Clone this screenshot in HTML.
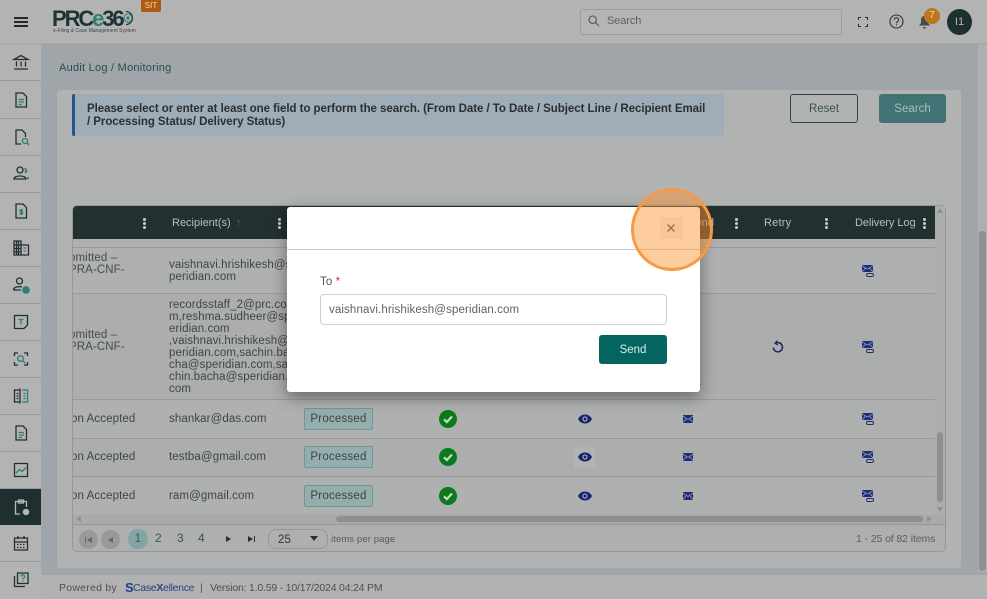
<!DOCTYPE html>
<html><head><meta charset="utf-8"><style>
*{box-sizing:border-box}
html,body{margin:0;padding:0;width:987px;height:599px;overflow:hidden;background:#a0a5a9;font-family:"Liberation Sans",sans-serif;color:#3a3f3f}
.a{position:absolute}
.t{position:absolute;white-space:nowrap;font-size:11.5px;letter-spacing:.1px;color:#3f4545}
.side{position:absolute;left:0;width:41px;height:37px;border-bottom:1px solid #989b9b;background:#b3b3b3}
.side svg{position:absolute;left:11px;top:8px;width:20px;height:20px;fill:none;stroke:#232f30;stroke-width:1.3}
.hl{position:absolute;left:73px;width:863px;height:1px;background:#989a9a}
.badge{position:absolute;left:304px;width:69px;height:22px;background:#95aead;border:1px solid #6a9a97;border-radius:2px;font-size:11.5px;letter-spacing:.2px;color:#3a4444;text-align:center;line-height:20px}
.dots{position:absolute;width:3px;height:3px;border-radius:50%;background:#c9cecd;box-shadow:0 4px 0 #c9cecd,0 8px 0 #c9cecd;top:218px}
.clip{position:absolute;left:73px;width:70px;overflow:hidden;height:30px}
.clip .t{left:-4px;top:0}
svg{position:absolute;overflow:visible}
</style></head><body>

<!-- top bar -->
<div class="a" style="left:0;top:0;width:987px;height:44px;background:#b3b3b3;border-bottom:1px solid #a8a9a9"></div>
<div class="a" style="left:14px;top:17px;width:14px;height:2px;background:#22292a;box-shadow:0 4px 0 #22292a,0 8px 0 #22292a"></div>
<div class="t" style="left:52px;top:6px;font-size:22px;font-weight:bold;letter-spacing:-2.1px;color:#1e3336;line-height:26px">PRC<span style="color:#2f7f78">e</span>36</div>
<svg style="left:122px;top:10px" width="14" height="16" viewBox="0 0 14 16"><path d="M4 1.500A6.500 6.500 0 1 1 4 14.500" fill="none" stroke="#1e3336" stroke-width="1.200"/><circle cx="6" cy="8" r="4" fill="none" stroke="#2f7f78" stroke-width="1.100"/><circle cx="6" cy="8" r="1.600" fill="#2f7f78"/></svg>
<div class="t" style="left:53px;top:28px;font-size:5px;letter-spacing:0;color:#3d4a4c">e-Filing &amp; Case Management System</div>
<div class="a" style="left:141px;top:0;width:20px;height:12px;background:#b05a10;border-radius:0 0 2px 2px;color:#e8d3c0;font-size:8px;text-align:center;line-height:11px">SIT</div>

<div class="a" style="left:580px;top:9px;width:262px;height:26px;border:1px solid #9b9c9c;border-radius:3px;background:#b5b5b5"></div>
<svg style="left:588px;top:15px" width="12" height="12" viewBox="0 0 12 12" fill="none" stroke="#555" stroke-width="1.100"><circle cx="4.700" cy="4.700" r="3.700"/><path d="M7.500 7.500L11 11"/></svg>
<div class="t" style="left:607px;top:15px;color:#5f6161;font-size:11px;letter-spacing:-.1px">Search</div>
<svg style="left:858px;top:17px" width="10" height="10" viewBox="0 0 10 10" fill="none" stroke="#333" stroke-width="1.100"><path d="M0.500 3V.5H3M7 .5H9.500V3M9.500 7V9.500H7M3 9.500H.5V7"/></svg>
<svg style="left:889px;top:14px" width="15" height="15" viewBox="0 0 15 15" fill="none" stroke="#333" stroke-width="1.100"><circle cx="7.500" cy="7.500" r="6.500"/><path d="M5.400 5.800a2.100 2.100 0 1 1 3.200 1.800c-.7.400-1.100.8-1.100 1.600M7.500 10.400v1.100"/></svg>
<svg style="left:918px;top:15px" width="13" height="14" viewBox="0 0 13 14"><path d="M6.500 1C4 1 3 3 3 5.500V8L1 10.500H12L10 8V5.500C10 3 9 1 6.500 1Z" fill="#474a4b"/><path d="M5 12h3v1.400H5z" fill="#474a4b"/></svg>
<div class="a" style="left:924px;top:8px;width:16px;height:16px;border-radius:50%;background:#bd7719;color:#ecd9bd;font-size:10px;text-align:center;line-height:15px">7</div>
<div class="a" style="left:947px;top:9px;width:25px;height:26px;border-radius:50%;background:#1e2f30;color:#b4baba;font-size:11px;text-align:center;line-height:26px">I1</div>

<!-- sidebar -->
<div class="a" style="left:0;top:44px;width:41px;height:555px;background:#b3b3b3"></div>
<div class="side" style="top:44px"><svg viewBox="0 0 20 20"><path d="M3 7.500L10 3.500L17 7.500H3ZM5.500 9.500V14.500M10 9.500V14.500M14.500 9.500V14.500M3 17H17"/></svg></div>
<div class="side" style="top:82px"><svg viewBox="0 0 20 20"><path d="M5 3H12L15.500 6.500V17H5Z"/><path d="M7.500 9.500H13M7.500 12H13M7.500 14.500H11" stroke="#2f7f78"/></svg></div>
<div class="side" style="top:119px"><svg viewBox="0 0 20 20"><path d="M10 17H5V3H11L14.500 6.500V10"/><circle cx="14" cy="14" r="2.500" stroke="#2f7f78"/><path d="M16 16L18 18" stroke="#2f7f78"/></svg></div>
<div class="side" style="top:156px"><svg viewBox="0 0 20 20"><circle cx="9" cy="6" r="3"/><path d="M3 15C3 11 15 11 15 15Z"/><path d="M14 4L15.500 7L14 9M16 14H18" stroke="#2f7f78" stroke-width="1.800"/></svg></div>
<div class="side" style="top:193px"><svg viewBox="0 0 20 20"><path d="M5 3H12L15.500 6.500V17H5Z"/><path d="M12.200 9H9.200V11H11.500V13H8.500M10.300 8V14" stroke="#2f7f78"/></svg></div>
<div class="side" style="top:230px"><svg viewBox="0 0 20 20"><path d="M3 3H10V17H3ZM10 7H17.500V17H10ZM5.500 3V17M7.500 3V17M3 7H10M3 10.500H10M3 14H10"/><path d="M12.500 10H15M12.500 13H15" stroke="#2f7f78"/></svg></div>
<div class="side" style="top:267px"><svg viewBox="0 0 20 20"><circle cx="8.500" cy="6" r="3"/><path d="M2.500 15C2.500 12 8 11 11 12M2.500 15H10"/><circle cx="15" cy="15" r="3.200" fill="#2f7f78" stroke="#2f7f78"/></svg></div>
<div class="side" style="top:304px"><svg viewBox="0 0 20 20"><path d="M3.500 3.500H16.500V13L13 16.500H3.500Z"/><path d="M7.500 7.500H12.500M10 7.500V12.500" stroke="#2f7f78"/></svg></div>
<div class="side" style="top:341px"><svg viewBox="0 0 20 20"><path d="M3.500 7V4H7M13 4H16.500V7M16.500 13V16H13M7 16H3.500V13"/><circle cx="9.500" cy="9.500" r="2.800" stroke="#2f7f78"/><path d="M11.500 11.500L14 14" stroke="#2f7f78"/></svg></div>
<div class="side" style="top:378px"><svg viewBox="0 0 20 20"><path d="M9 4H3.500V16H9M9 2.500V17.500M5.500 7.500H7.500M5.500 10H7.500M5.500 12.500H7.500"/><path d="M11 4H16.500V16H11M12.500 7.500H14.500M12.500 10H14.500M12.500 12.500H14.500" stroke="#2f7f78"/></svg></div>
<div class="side" style="top:415px"><svg viewBox="0 0 20 20"><path d="M5 3H12L15.500 6.500V17H5Z"/><path d="M7.500 9.500H13M7.500 12H13M7.500 14.500H11" stroke="#2f7f78"/></svg></div>
<div class="side" style="top:452px"><svg viewBox="0 0 20 20"><path d="M3.500 3.500H16.500V16.500H3.500Z"/><path d="M5 13L8.500 9.500L11 11.500L15 7.500" stroke="#2f7f78"/></svg></div>
<div class="side" style="top:489px;background:#1f2f30;height:36px;border:0"><svg viewBox="0 0 20 20" style="stroke:#b4b9b9"><path d="M9 17H4.500V4.500H15.500V10M7.500 3H12.500V6H7.500Z"/><circle cx="15" cy="15" r="2.600" fill="#b4b9b9"/></svg></div>
<div class="side" style="top:525px"><svg viewBox="0 0 20 20"><path d="M3.500 5H16.500V17H3.500ZM3.500 9H16.500M7 3V6M13 3V6"/><path d="M6 11.500H14M6 14.500H14" stroke-dasharray="1.500 1.500"/></svg></div>
<div class="side" style="top:562px;border:0"><svg viewBox="0 0 20 20"><path d="M6.500 3H17V13.500H6.500ZM3.500 6V16.500H14"/><path d="M10 6.500a1.800 1.800 0 1 1 2.600 1.700c-.6.300-.9.700-.9 1.300M11.700 10.500v1" stroke="#2f7f78"/></svg></div>

<!-- content -->
<div class="t" style="left:59px;top:62px;color:#23504f;font-size:11px;letter-spacing:.25px">Audit Log / Monitoring</div>
<div class="a" style="left:57px;top:90px;width:904px;height:478px;background:#b1b2b2;border-radius:3px"></div>
<div class="a" style="left:72px;top:94px;width:652px;height:42px;background:#9fadb9;border-left:3px solid #23588f;border-radius:2px"></div>
<div class="t" style="left:87px;top:102px;font-size:11.500px;font-weight:bold;letter-spacing:-.05px;color:#2b2f31;line-height:13px;padding-top:.5px">Please select or enter at least one field to perform the search. (From Date / To Date / Subject Line / Recipient Email<br>/ Processing Status/ Delivery Status)</div>
<div class="a" style="left:790px;top:94px;width:68px;height:29px;border:1px solid #234a49;border-radius:3px;text-align:center;line-height:28px;font-size:11.500px;color:#3c5554">Reset</div>
<div class="a" style="left:879px;top:94px;width:67px;height:29px;background:#417374;border-radius:3px;text-align:center;line-height:30px;font-size:11.500px;color:#a6c0bf">Search</div>

<!-- table -->
<div class="a" style="left:72px;top:205px;width:874px;height:347px;border:1px solid #969898;border-radius:5px;background:#aeafaf"></div>
<div class="a" style="left:73px;top:206px;width:862px;height:33px;background:#22302f;border-radius:4px 0 0 0"></div>
<div class="a" style="left:73px;top:248px;width:862px;height:45px;background:#afb0b0"></div>
<div class="a" style="left:73px;top:293px;width:862px;height:107px;background:#acadad"></div>
<div class="a" style="left:73px;top:400px;width:862px;height:38px;background:#afb0b0"></div>
<div class="a" style="left:73px;top:438px;width:862px;height:39px;background:#acadad"></div>
<div class="a" style="left:73px;top:477px;width:862px;height:37px;background:#afb0b0"></div>
<div class="hl" style="top:247px"></div><div class="hl" style="top:293px"></div><div class="hl" style="top:399px"></div><div class="hl" style="top:438px"></div><div class="hl" style="top:476px"></div>
<div class="a" style="left:73px;top:514px;width:872px;height:11px;background:#a9aaaa;border-bottom:1px solid #969898"></div>
<div class="a" style="left:336px;top:516px;width:587px;height:6px;background:#8e8f8f;border-radius:3px"></div>
<div class="a" style="left:935px;top:206px;width:10px;height:308px;background:#acadad"></div>
<div class="a" style="left:937px;top:432px;width:6px;height:70px;background:#8e8f8f;border-radius:3px"></div>
<svg style="left:937px;top:208px" width="6" height="5" viewBox="0 0 6 5" fill="#8e8f8f"><path d="M3 0L6 5H0Z"/></svg>
<svg style="left:937px;top:507px" width="6" height="5" viewBox="0 0 6 5" fill="#8e8f8f"><path d="M0 0H6L3 5Z"/></svg>
<svg style="left:927px;top:516px" width="5" height="6" viewBox="0 0 5 6" fill="#8e8f8f"><path d="M0 0L5 3L0 6Z"/></svg>
<svg style="left:76px;top:516px" width="5" height="6" viewBox="0 0 5 6" fill="#8e8f8f"><path d="M5 0L0 3L5 6Z"/></svg>

<div class="t" style="left:172px;top:217px;color:#b9bfbe;font-size:11px;letter-spacing:0">Recipient(s) <span style="color:#5f6b6a;margin-left:2px">↑</span></div>
<div class="t" style="left:764px;top:217px;color:#b9bfbe;font-size:11px;letter-spacing:.2px">Retry</div>
<div class="t" style="left:855px;top:217px;color:#b9bfbe;font-size:11px;letter-spacing:-.05px">Delivery Log</div>
<div class="t" style="left:688px;top:217px;color:#b9bfbe;font-size:11px">Send</div>
<div class="dots" style="left:143px"></div><div class="dots" style="left:278px"></div><div class="dots" style="left:735px"></div><div class="dots" style="left:825px"></div><div class="dots" style="left:923px"></div>

<div class="clip" style="top:252px"><div class="t" style="line-height:12px;color:#474c4c">omitted –<br>PRA-CNF-</div></div>
<div class="t" style="left:169px;top:259px;line-height:12px">vaishnavi.hrishikesh@s<br>peridian.com</div>
<div class="clip" style="top:329px"><div class="t" style="line-height:12px;color:#474c4c">omitted –<br>PRA-CNF-</div></div>
<div class="t" style="left:169px;top:299px;line-height:12px">recordsstaff_2@prc.co<br>m,reshma.sudheer@sp<br>eridian.com<br>,vaishnavi.hrishikesh@s<br>peridian.com,sachin.ba<br>cha@speridian.com,sa<br>chin.bacha@speridian.<br>com</div>
<div class="clip" style="top:413px"><div class="t" style="left:-2px">on Accepted</div></div><div class="t" style="left:169px;top:413px">shankar@das.com</div>
<div class="clip" style="top:451px"><div class="t" style="left:-2px">on Accepted</div></div><div class="t" style="left:169px;top:451px">testba@gmail.com</div>
<div class="clip" style="top:490px"><div class="t" style="left:-2px">on Accepted</div></div><div class="t" style="left:169px;top:490px">ram@gmail.com</div>

<div class="badge" style="top:408px">Processed</div>
<div class="badge" style="top:446px">Processed</div>
<div class="badge" style="top:485px">Processed</div>

<svg style="left:439px;top:410px" width="18" height="18" viewBox="0 0 18 18"><circle cx="9" cy="9" r="9" fill="#0b7a1c"/><path d="M5 9.300L7.800 12L13 6.500" fill="none" stroke="#c9d8c9" stroke-width="2.200"/></svg>
<svg style="left:439px;top:448px" width="18" height="18" viewBox="0 0 18 18"><circle cx="9" cy="9" r="9" fill="#0b7a1c"/><path d="M5 9.300L7.800 12L13 6.500" fill="none" stroke="#c9d8c9" stroke-width="2.200"/></svg>
<svg style="left:439px;top:487px" width="18" height="18" viewBox="0 0 18 18"><circle cx="9" cy="9" r="9" fill="#0b7a1c"/><path d="M5 9.300L7.800 12L13 6.500" fill="none" stroke="#c9d8c9" stroke-width="2.200"/></svg>

<div class="a" style="left:574px;top:447px;width:21px;height:21px;background:#b2b3b3"></div>
<svg style="left:578px;top:414px" width="14" height="10" viewBox="0 0 14 10"><path d="M0 5C3 -1 11 -1 14 5C11 11 3 11 0 5Z" fill="#14246f"/><circle cx="7" cy="5" r="2.600" fill="#b0b0b0"/><circle cx="7" cy="5" r="1.500" fill="#14246f"/></svg>
<svg style="left:578px;top:452px" width="14" height="10" viewBox="0 0 14 10"><path d="M0 5C3 -1 11 -1 14 5C11 11 3 11 0 5Z" fill="#14246f"/><circle cx="7" cy="5" r="2.600" fill="#b0b0b0"/><circle cx="7" cy="5" r="1.500" fill="#14246f"/></svg>
<svg style="left:578px;top:491px" width="14" height="10" viewBox="0 0 14 10"><path d="M0 5C3 -1 11 -1 14 5C11 11 3 11 0 5Z" fill="#14246f"/><circle cx="7" cy="5" r="2.600" fill="#b0b0b0"/><circle cx="7" cy="5" r="1.500" fill="#14246f"/></svg>

<svg style="left:683px;top:415px" width="10" height="8" viewBox="0 0 10 8"><rect width="10" height="8" fill="#1e2d76"/><path d="M0 1L5 4.500L10 1M0 7.500L3.500 3.500M10 7.500L6.500 3.500" stroke="#aab0c6" fill="none" stroke-width=".7"/></svg>
<svg style="left:683px;top:453px" width="10" height="8" viewBox="0 0 10 8"><rect width="10" height="8" fill="#1e2d76"/><path d="M0 1L5 4.500L10 1M0 7.500L3.500 3.500M10 7.500L6.500 3.500" stroke="#aab0c6" fill="none" stroke-width=".7"/></svg>
<svg style="left:683px;top:492px" width="10" height="8" viewBox="0 0 10 8"><rect width="10" height="8" fill="#1e2d76"/><path d="M0 1L5 4.500L10 1M0 7.500L3.500 3.500M10 7.500L6.500 3.500" stroke="#aab0c6" fill="none" stroke-width=".7"/></svg>

<svg style="left:862px;top:265px" width="12" height="13" viewBox="0 0 12 13"><rect width="11" height="7" fill="#1e2d76"/><path d="M0 .8L5.500 4L11 .8M0 6.800L3.800 3M11 6.800L7.200 3" stroke="#aab0c6" fill="none" stroke-width=".7"/><rect x="4.500" y="8.500" width="7" height="3" rx="1.500" fill="none" stroke="#1e2a68" stroke-width=".9"/></svg>
<svg style="left:862px;top:341px" width="12" height="13" viewBox="0 0 12 13"><rect width="11" height="7" fill="#1e2d76"/><path d="M0 .8L5.500 4L11 .8M0 6.800L3.800 3M11 6.800L7.200 3" stroke="#aab0c6" fill="none" stroke-width=".7"/><rect x="4.500" y="8.500" width="7" height="3" rx="1.500" fill="none" stroke="#1e2a68" stroke-width=".9"/></svg>
<svg style="left:862px;top:413px" width="12" height="13" viewBox="0 0 12 13"><rect width="11" height="7" fill="#1e2d76"/><path d="M0 .8L5.500 4L11 .8M0 6.800L3.800 3M11 6.800L7.200 3" stroke="#aab0c6" fill="none" stroke-width=".7"/><rect x="4.500" y="8.500" width="7" height="3" rx="1.500" fill="none" stroke="#1e2a68" stroke-width=".9"/></svg>
<svg style="left:862px;top:451px" width="12" height="13" viewBox="0 0 12 13"><rect width="11" height="7" fill="#1e2d76"/><path d="M0 .8L5.500 4L11 .8M0 6.800L3.800 3M11 6.800L7.200 3" stroke="#aab0c6" fill="none" stroke-width=".7"/><rect x="4.500" y="8.500" width="7" height="3" rx="1.500" fill="none" stroke="#1e2a68" stroke-width=".9"/></svg>
<svg style="left:862px;top:490px" width="12" height="13" viewBox="0 0 12 13"><rect width="11" height="7" fill="#1e2d76"/><path d="M0 .8L5.500 4L11 .8M0 6.800L3.800 3M11 6.800L7.200 3" stroke="#aab0c6" fill="none" stroke-width=".7"/><rect x="4.500" y="8.500" width="7" height="3" rx="1.500" fill="none" stroke="#1e2a68" stroke-width=".9"/></svg>
<svg style="left:772px;top:340px" width="12" height="13" viewBox="0 0 12 13" fill="none" stroke="#1b2360" stroke-width="1.500"><path d="M3.200 3.500A4.600 4.600 0 1 1 1.300 7.500"/><path d="M5.500 .5L3 3.300L5.800 5" stroke-width="1.200"/></svg>

<!-- pagination -->
<div class="a" style="left:79px;top:530px;width:19px;height:19px;border-radius:50%;background:#989999"></div>
<div class="a" style="left:101px;top:530px;width:19px;height:19px;border-radius:50%;background:#989999"></div>
<svg style="left:85px;top:537px" width="7" height="6" viewBox="0 0 7 6" fill="#666"><path d="M0 0H1V6H0ZM7 0V6L2 3Z"/></svg>
<svg style="left:108px;top:537px" width="5" height="6" viewBox="0 0 5 6" fill="#666"><path d="M5 0V6L0 3Z"/></svg>
<div class="a" style="left:128px;top:529px;width:20px;height:20px;border-radius:50%;background:#83a3a4;color:#35605f;font-size:12px;text-align:center;line-height:19px">1</div>
<div class="t" style="left:155px;top:531px;font-size:12px;color:#3f5252">2</div>
<div class="t" style="left:177px;top:531px;font-size:12px;color:#3f5252">3</div>
<div class="t" style="left:198px;top:531px;font-size:12px;color:#3f5252">4</div>
<svg style="left:226px;top:536px" width="5" height="6" viewBox="0 0 5 6" fill="#2c2f30"><path d="M0 0V6L5 3Z"/></svg>
<svg style="left:248px;top:536px" width="7" height="6" viewBox="0 0 7 6" fill="#2c2f30"><path d="M0 0V6L5 3ZM6 0H7V6H6Z"/></svg>
<div class="a" style="left:268px;top:529px;width:60px;height:20px;border:1px solid #969898;border-radius:8px"></div>
<div class="t" style="left:278px;top:534px;font-size:11.500px;color:#333">25</div>
<svg style="left:310px;top:536px" width="8" height="5" viewBox="0 0 8 5" fill="#2a2d2e"><path d="M0 0H8L4 5Z"/></svg>
<div class="t" style="left:331px;top:534px;font-size:9.500px;color:#585c5c;letter-spacing:.1px">items per page</div>
<div class="t" style="left:856px;top:533px;font-size:10.500px;color:#5b5e5e;letter-spacing:-.1px">1 - 25 of 82 items</div>

<!-- page scrollbar -->
<div class="a" style="left:978px;top:45px;width:9px;height:527px;background:#aeafaf"></div>
<div class="a" style="left:979px;top:231px;width:7px;height:340px;background:#8f9092;border-radius:3px"></div>

<!-- footer -->
<div class="a" style="left:41px;top:575px;width:946px;height:24px;background:#b2b2b2"></div>
<div class="t" style="left:59px;top:582px;font-size:10.500px;color:#4d4f4f;letter-spacing:.25px">Powered by</div>
<div class="t" style="left:125px;top:580px;font-size:13px;font-weight:bold;color:#1e3f8f">S</div>
<div class="t" style="left:133px;top:582px;font-size:10.500px;color:#2a3f7e;letter-spacing:-.3px">Case<b>X</b>ellence</div>
<div class="t" style="left:200px;top:582px;font-size:10.500px;color:#4d4f4f">|</div>
<div class="t" style="left:210px;top:582px;font-size:10.500px;color:#4d4f4f;letter-spacing:-.2px">Version: 1.0.59 - 10/17/2024 04:24 PM</div>

<!-- modal -->
<div class="a" style="left:287px;top:207px;width:413px;height:185px;background:#fff;border-radius:3px;box-shadow:0 5px 16px rgba(0,0,0,.42)"></div>
<div class="a" style="left:287px;top:249px;width:413px;height:1px;background:#c9c9c9"></div>
<div class="t" style="left:320px;top:276px;font-size:11.500px;color:#555">To <span style="color:#d0342c">*</span></div>
<div class="a" style="left:320px;top:294px;width:347px;height:31px;border:1px solid #cfcfcf;border-radius:4px"></div>
<div class="t" style="left:329px;top:304px;font-size:11.500px;color:#5e6262;letter-spacing:.12px">vaishnavi.hrishikesh@speridian.com</div>
<div class="a" style="left:599px;top:335px;width:68px;height:29px;background:#046560;border-radius:3px;color:#d8eeeb;font-size:11.500px;text-align:center;line-height:30px">Send</div>

<div class="a" style="left:660px;top:217px;width:23px;height:22px;background:#f2f2f2"></div>
<svg style="left:667px;top:224px" width="8" height="8" viewBox="0 0 8 8" stroke="#444" stroke-width="1.300"><path d="M.5 .5L7.500 7.500M7.500 .5L.5 7.500"/></svg>

<!-- highlight circle -->
<div class="a" style="left:631px;top:188px;width:82px;height:83px;border-radius:50%;border:3.500px solid #f59a45;background:rgba(250,150,60,.49)"></div>
</body></html>
